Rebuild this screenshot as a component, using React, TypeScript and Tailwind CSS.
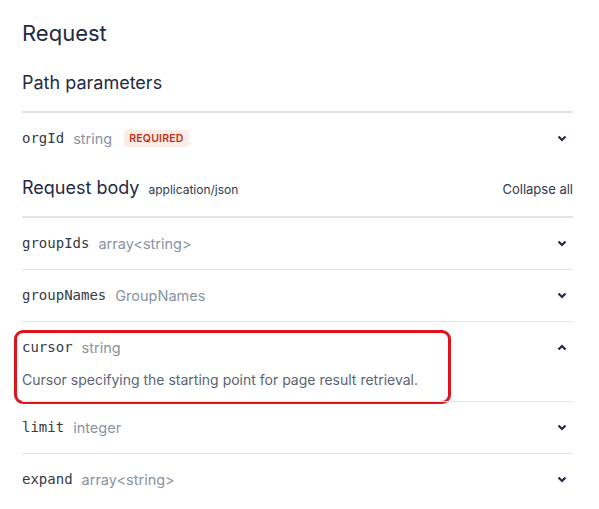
import { FC } from "react";

interface Field {
  name: string;
  type: string;
  required?: boolean;
  open?: boolean;
  description?: string;
}

const bodyFields: Field[] = [
  { name: "groupIds", type: "array<string>" },
  { name: "groupNames", type: "GroupNames" },
  {
    name: "cursor",
    type: "string",
    open: true,
    description: "Cursor specifying the starting point for page result retrieval.",
  },
  { name: "limit", type: "integer" },
  { name: "expand", type: "array<string>" },
];

const Chevron: FC<{ up?: boolean }> = ({ up }) => (
  <svg width="10" height="7" viewBox="0 0 10 7" className="text-[#1f2a44]">
    <polyline
      points={up ? "1.5,5.5 5,2 8.5,5.5" : "1.5,1.5 5,5 8.5,1.5"}
      fill="none"
      stroke="currentColor"
      strokeWidth="2.2"
    />
  </svg>
);

const FieldRow: FC<{ field: Field; first?: boolean }> = ({ field, first }) => (
  <div className={`relative ${first ? "" : "border-t border-[#e3e5e8]"}`}>
    <div className="flex items-center h-[51px] pr-[6px]">
      <span className="font-['DejaVu_Sans_Mono',monospace] text-[14px] text-[#333a45]">{field.name}</span>
      <span className="ml-[9px] text-[14.5px] text-[#8a93a3]">{field.type}</span>
      {field.required && (
        <span className="ml-[12px] px-[5px] py-[1px] rounded-[3px] bg-[#fdebe6] text-[#b8341c] text-[10.5px] font-semibold tracking-[0.2px]">
          REQUIRED
        </span>
      )}
      <span className="ml-auto">
        <Chevron up={field.open} />
      </span>
    </div>
    {field.description && (
      <p className="-mt-[3px] pb-[11px] text-[14px] leading-[20px] text-[#5b6474]">{field.description}</p>
    )}
    {field.open && (
      <div className="absolute left-[-8px] top-[8px] w-[437px] h-[74px] border-[3.5px] border-[#e0121b] rounded-[9px] pointer-events-none" />
    )}
  </div>
);

const App: FC = () => {
  return (
    <div className="w-[599px] h-[509px] bg-white overflow-hidden font-['Inter',sans-serif] text-[#1f2a44]">
      <div className="pl-[22px] pr-[26px] pt-[17px]">
        <h1 className="text-[22px] leading-[32px]">Request</h1>
        <h2 className="mt-[20px] text-[18px] leading-[28px]">Path parameters</h2>
        <div className="mt-[14px] border-t-2 border-[#e1e3e6]">
          <FieldRow field={{ name: "orgId", type: "string", required: true }} first />
        </div>
        <div className="mt-[10px] flex items-baseline">
          <h2 className="text-[18px] leading-[28px]">Request body</h2>
          <span className="ml-[9px] text-[12px] text-[#2f3a52]">application/json</span>
          <button className="ml-auto text-[13px] text-[#2f3a52]">Collapse all</button>
        </div>
        <div className="mt-[14px] border-t-2 border-[#e1e3e6]">
          {bodyFields.map((f, i) => (
            <FieldRow key={f.name} field={f} first={i === 0} />
          ))}
        </div>
      </div>
    </div>
  );
};

export default App;
